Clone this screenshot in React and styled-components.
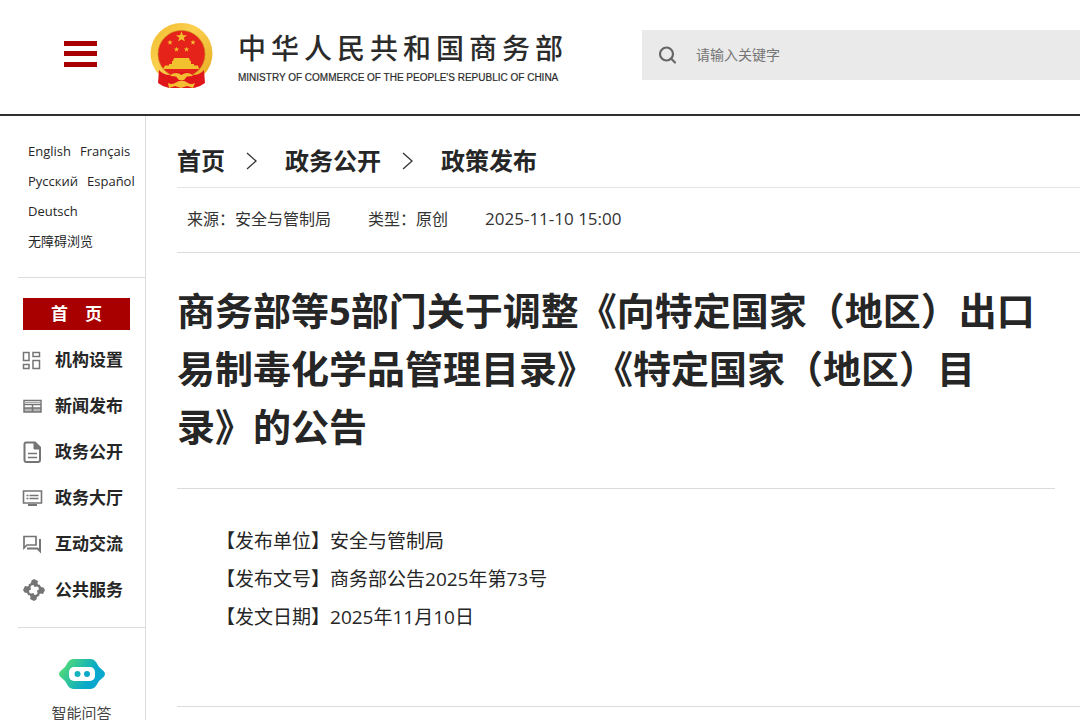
import React from 'react';
import styled, { createGlobalStyle } from 'styled-components';

const GlobalStyle = createGlobalStyle`
    * {
        box-sizing: border-box;
    }
    body {
        margin: 0;
        background: #fff;
        color: #262626;
        font-family: "Open Sans", "Noto Sans CJK SC", sans-serif;
        text-spacing-trim: space-all;
    }
    h1, p, ul, ol, dl, dd {
        margin: 0;
        padding: 0;
    }
    ul, ol {
        list-style: none;
    }
    a {
        color: inherit;
        text-decoration: none;
    }
`;

const Header = styled.header`
    display: flex;
    align-items: center;
    height: 116px;
    padding-left: 64px;
    padding-bottom: 4px;
    border-bottom: 2px solid #2f2f2f;
`;

const MenuButton = styled.button`
    display: flex;
    flex-direction: column;
    justify-content: space-between;
    width: 33px;
    height: 26px;
    margin: 0 53px 3px 0;
    padding: 0;
    border: 0;
    background: none;
`;

const MenuBar = styled.span`
    width: 100%;
    height: 5px;
    background: #a80000;
`;

const Brand = styled.a`
    display: flex;
    align-items: center;
    gap: 24px;
    padding-top: 2px;
    color: #2b2b2b;
`;

const BrandText = styled.span`
    display: flex;
    flex-direction: column;
    gap: 6px;
    padding-top: 2px;
    white-space: nowrap;
`;

const BrandName = styled.span`
    font-size: 28px;
    line-height: 36px;
    font-weight: 500;
    letter-spacing: 5px;
`;

const BrandSub = styled.span`
    font-family: "Liberation Sans", Arial, sans-serif;
    font-size: 10px;
    line-height: 12px;
    -webkit-text-stroke: 0.2px #2b2b2b;
`;

const Search = styled.form`
    display: flex;
    flex: 1;
    align-items: center;
    gap: 18px;
    height: 50px;
    margin-left: 74px;
    padding-left: 16px;
    background: #eaeaea;
`;

const SearchButton = styled.button`
    display: flex;
    padding: 0;
    border: 0;
    background: none;
`;

const SearchInput = styled.input`
    flex: 1;
    min-width: 0;
    padding: 0 0 2px;
    border: 0;
    outline: 0;
    background: none;
    font-family: inherit;
    font-size: 14px;
    &::placeholder {
        color: #757575;
        opacity: 1;
    }
`;

const Page = styled.div`
    display: flex;
    min-height: calc(100vh - 116px);
`;

const Sidebar = styled.aside`
    flex: 0 0 146px;
    padding-left: 18px;
    border-right: 1px solid #dcdcdc;
`;

const Languages = styled.nav`
    display: flex;
    flex-wrap: wrap;
    column-gap: 9px;
    padding: 20px 0 21px 10px;
    border-bottom: 1px solid #dcdcdc;
    font-size: 13px;
    line-height: 30px;
    white-space: nowrap;
`;

const Nav = styled.nav`
    padding: 20px 15px 14px 5px;
    border-bottom: 1px solid #dcdcdc;
`;

const HomeLink = styled.a`
    display: block;
    margin-bottom: 7px;
    background: #a80000;
    color: #fff;
    font-size: 17px;
    font-weight: bold;
    line-height: 32px;
    text-align: center;
    white-space: pre;
`;

const NavLink = styled.a`
    display: flex;
    align-items: center;
    gap: 12px;
    font-size: 17px;
    font-weight: bold;
    line-height: 46px;
    white-space: nowrap;
`;

const NavIcon = styled.svg`
    flex: none;
    width: 20px;
    height: 22px;
    overflow: visible;
    fill: none;
    stroke: #757575;
    stroke-width: 2;
`;

const Assistant = styled.a`
    display: flex;
    flex-direction: column;
    align-items: center;
    gap: 12px;
    padding-top: 31px;
    font-size: 15px;
    line-height: 24px;
    color: #444;
`;

const Main = styled.main`
    flex: 1;
    min-width: 0;
    padding-left: 31px;
`;

const Crumbs = styled.ol`
    display: flex;
    align-items: center;
    gap: 19px;
    padding: 24px 0 6px;
    border-bottom: 1px solid #e4e4e4;
    font-size: 24px;
    font-weight: bold;
    line-height: 41px;
`;

const Crumb = styled.li`
    display: flex;
    align-items: center;
    gap: 19px;
`;

const Meta = styled.div`
    display: flex;
    gap: 37px;
    padding: 16px 10px 18px;
    border-bottom: 1px solid #dcdcdc;
    font-size: 16px;
    line-height: 30px;
    color: #333;
`;

const PublishTime = styled.time`
    font-size: 17px;
`;

const Title = styled.h1`
    margin-right: 25px;
    padding: 28px 10px 33px 0;
    border-bottom: 1px solid #dcdcdc;
    font-size: 38px;
    line-height: 58px;
`;

const Details = styled.dl`
    padding: 33px 0 70px 39px;
    border-bottom: 1px solid #dcdcdc;
    font-size: 19px;
    line-height: 38px;
`;

const Detail = styled.div`
    display: flex;
`;

const languages = ['English', 'Français', 'Русский', 'Español', 'Deutsch', '无障碍浏览'];

const links = [
    {
        text: '机构设置',
        icon: <path d="M.5 3.5h5.500v8H.5zM10 3.500h6.500v4H10zM.5 15.500H6v4H.5zM10 11.500h6.500v8H10z" strokeWidth="1.5" />
    },
    {
        text: '新闻发布',
        icon: <>
            <path d="M1 13h17v4H1z" fill="#b5b5b5" stroke="none" />
            <path d="M1 5.500h17v11.500H1zM1 9.500h17M1 13h17M9.500 9.500v7.500" strokeWidth="1.5" />
            <path d="M1 7.500h17" strokeWidth="1" stroke="#a5a5a5" />
        </>
    },
    {
        text: '政务公开',
        icon: <>
            <path d="M3 1.500h9l5 5V19q0 2-2 2H3.500q-2 0-2-2V3.500q0-2 1.500-2z" />
            <path d="M11 1.500V8h6z" fill="#757575" strokeWidth="1" />
            <path d="M5 12.500h9M5 16.500h9" strokeWidth="1.6" />
        </>
    },
    {
        text: '政务大厅',
        icon: <>
            <path d="M.5 4h18v12H.5z" strokeWidth="1.6" />
            <path d="M3.500 8.500h2M6.500 8.500h9M3.500 11.500h2M6.500 11.500h9" strokeWidth="1.5" />
            <path d="M5 18h9" />
        </>
    },
    {
        text: '互动交流',
        icon: <>
            <path d="M1 3.500h12v8.500H4l-3 3z" strokeWidth="1.7" />
            <path d="M17 6v12l-2.500-2.500H4" />
        </>
    },
    {
        text: '公共服务',
        icon: <g fill="#757575" stroke="none">
            {[0, 90, 180, 270].map(angle => (
                <path
                    key={angle}
                    transform={`rotate(${angle} 11 11)`}
                    d="M5.500 5.500L8 4l.5-2.500L11 0l4 2-.5 2.500L16.500 7l-5 1-1-2Q8 6 7 8z"
                />
            ))}
        </g>
    }
];

const star = '0,-5 1.2,-1.6 4.8,-1.6 1.9,0.6 3,4 0,1.9 -3,4 -1.9,0.6 -4.8,-1.6 -1.2,-1.6';

const Emblem = () => (
    <svg width="64" height="66" viewBox="0 0 64 66" aria-hidden="true">
        <defs>
            <linearGradient id="gold" x1="0" y1="0" x2="1" y2="1">
                <stop offset="0" stopColor="#f0b92d" />
                <stop offset="0.4" stopColor="#fbd04f" />
                <stop offset="1" stopColor="#e6a91e" />
            </linearGradient>
        </defs>
        <ellipse cx="31.500" cy="30.500" rx="31" ry="30.500" fill="url(#gold)" />
        <circle cx="31.500" cy="31" r="23.500" fill="#e5231b" stroke="#c9791a" strokeWidth="0.7" />
        <g fill="#f2c12e">
            <polygon points={star} transform="translate(31.5 14) scale(1.15)" />
            <polygon points={star} transform="translate(20 19.5) scale(.55)" />
            <polygon points={star} transform="translate(43 19.5) scale(.55)" />
            <polygon points={star} transform="translate(26.5 26.500) scale(.55)" />
            <polygon points={star} transform="translate(36.5 26.500) scale(.55)" />
            <path d="M24 35h15l1 3H23zM22 38h19v3h3v3H19v-3h3zM15 42.500h33l1 3.500H13z" />
        </g>
        <path d="M9 47q4 5 11 5l5-3h13l5 3q7 0 11-5l1 13q-5 4-11 5H19q-6-1-11-5z" fill="#df171b" />
        <path d="M20 53q2-3 6-3 3 0 5.500 2 2.500-2 5.500-2 4 0 6 3l-6 .5-3 3.500h-5l-3-3.500zM18 60q4 2 7 0 7-5 13 0 3 2 7 0l-2 5-6-2-6 2-6-2-6 2z" fill="#f4bd32" />
    </svg>
);

const Robot = () => (
    <svg width="46" height="30" viewBox="0 0 46 30" aria-hidden="true">
        <defs>
            <linearGradient id="robot" x1="0" y1="0.3" x2="1" y2="0.7">
                <stop offset="0.08" stopColor="#4bd67e" />
                <stop offset="0.7" stopColor="#08a9c9" />
                <stop offset="1" stopColor="#0ba5d2" />
            </linearGradient>
        </defs>
        <path d="M14 0h18q3 0 5 3l3 5 4.500 4q3 3 0 6L40 22l-3 5q-2 3-5 3H14q-3 0-5-3l-3-5-4.500-4q-3-3 0-6L6 8l3-5q2-3 5-3z" fill="url(#robot)" />
        <rect x="10" y="8" width="26" height="14" rx="5" fill="#fff" />
        <circle cx="18.500" cy="15" r="3" fill="#16b3bd" />
        <circle cx="28" cy="15" r="3" fill="#0ba9c9" />
    </svg>
);

const Chevron = () => (
    <svg width="22" height="20" viewBox="0 0 22 20" fill="none" stroke="#333" strokeWidth="1.3" aria-hidden="true">
        <path d="M3 2l9 8-9 8" />
    </svg>
);

export default () => (
    <>
        <GlobalStyle />
        <Header>
            <MenuButton type="button" aria-label="菜单">
                <MenuBar />
                <MenuBar />
                <MenuBar />
            </MenuButton>
            <Brand href="#">
                <Emblem />
                <BrandText>
                    <BrandName>中华人民共和国商务部</BrandName>
                    <BrandSub>MINISTRY OF COMMERCE OF THE PEOPLE'S REPUBLIC OF CHINA</BrandSub>
                </BrandText>
            </Brand>
            <Search>
                <SearchButton type="button" aria-label="搜索">
                    <svg width="20" height="20" viewBox="0 0 20 20" fill="none" stroke="#666" strokeWidth="2.2">
                        <circle cx="8.500" cy="9" r="6.500" />
                        <path d="M13 13.500l4 4" strokeLinecap="round" />
                    </svg>
                </SearchButton>
                <SearchInput type="text" placeholder="请输入关键字" aria-label="请输入关键字" />
            </Search>
        </Header>
        <Page>
            <Sidebar>
                <Languages>
                    {languages.map(language => <a href="#" key={language}>{language}</a>)}
                </Languages>
                <Nav>
                    <HomeLink href="#">首{'\u3000'}页</HomeLink>
                    <ul>
                        {links.map(link => (
                            <li key={link.text}>
                                <NavLink href="#">
                                    <NavIcon viewBox="0 0 20 22" aria-hidden="true">{link.icon}</NavIcon>
                                    {link.text}
                                </NavLink>
                            </li>
                        ))}
                    </ul>
                </Nav>
                <Assistant href="#">
                    <Robot />
                    智能问答
                </Assistant>
            </Sidebar>
            <Main>
                <Crumbs>
                    {['首页', '政务公开', '政策发布'].map((text, index) => (
                        <Crumb key={text}>
                            {index > 0 && <Chevron />}
                            <a href="#">{text}</a>
                        </Crumb>
                    ))}
                </Crumbs>
                <Meta>
                    <span>来源：安全与管制局</span>
                    <span>类型：原创</span>
                    <PublishTime>2025-11-10 15:00</PublishTime>
                </Meta>
                <Title>商务部等5部门关于调整《向特定国家（地区）出口易制毒化学品管理目录》《特定国家（地区）目录》的公告</Title>
                <Details>
                    <Detail>
                        <dt>【发布单位】</dt>
                        <dd>安全与管制局</dd>
                    </Detail>
                    <Detail>
                        <dt>【发布文号】</dt>
                        <dd>商务部公告2025年第73号</dd>
                    </Detail>
                    <Detail>
                        <dt>【发文日期】</dt>
                        <dd>2025年11月10日</dd>
                    </Detail>
                </Details>
            </Main>
        </Page>
    </>
);
